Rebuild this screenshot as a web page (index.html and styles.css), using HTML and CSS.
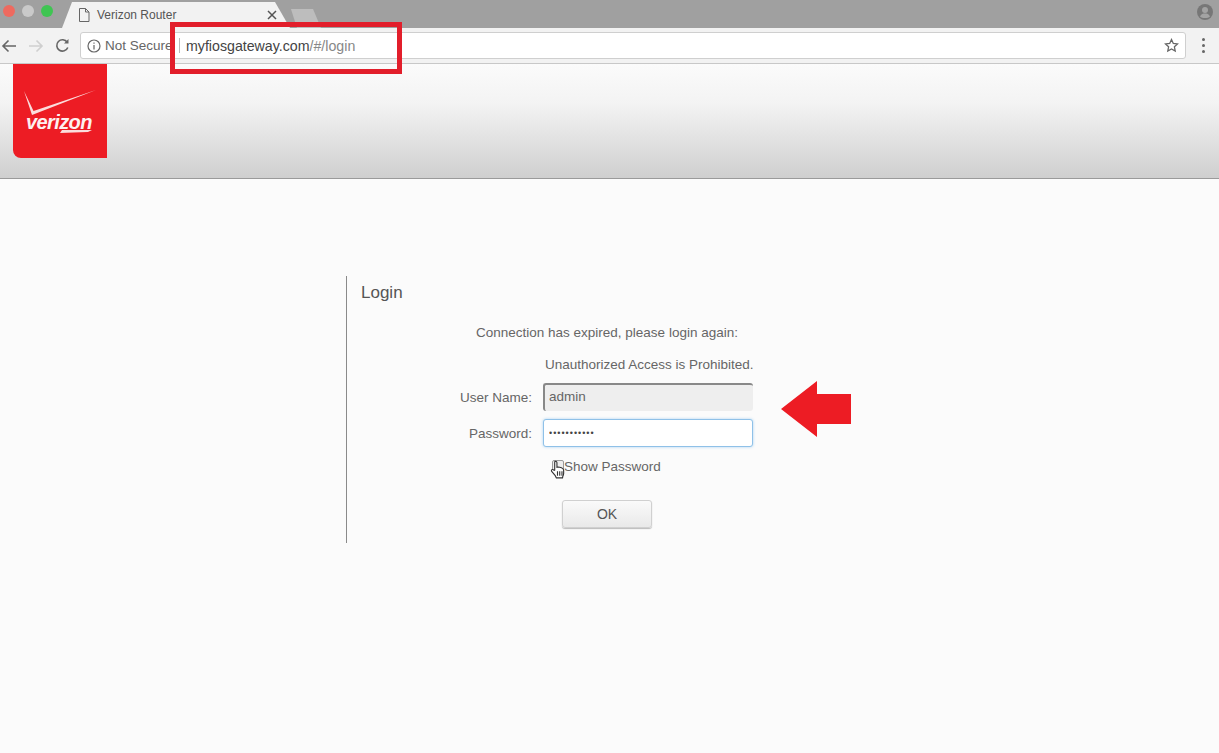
FILE: index.html
```html
<!DOCTYPE html>
<html lang="en">
<head>
    <meta charset="UTF-8">
    <meta name="viewport" content="width=device-width, initial-scale=1.0">
    <title>Verizon Router</title>
    <link rel="stylesheet" href="styles.css">
</head>
<body>
    <div class="tabstrip">
        <div class="lights">
            <span class="light red"></span>
            <span class="light grey"></span>
            <span class="light green"></span>
        </div>
        <div class="tab">
            <svg class="tab-icon" width="12" height="14" viewBox="0 0 12 14" fill="none" stroke="#666" stroke-width="1">
                <path d="M1.5 .5h6l3.5 3.5v9.500h-9.500z"/>
                <path d="M7.500 .5v3.500h3.500"/>
            </svg>
            <span class="tab-title">Verizon Router</span>
            <svg class="tab-close" width="10" height="10" viewBox="0 0 10 10" stroke="#555" stroke-width="1.500">
                <path d="M1 1l8 8M9 1l-8 8"/>
            </svg>
        </div>
        <div class="new-tab"></div>
        <svg class="profile" width="16" height="16" viewBox="0 0 16 16">
            <circle cx="8" cy="8" r="8" fill="#777"/>
            <circle cx="8" cy="6" r="3" fill="#a3a3a3"/>
            <path d="M3 12.500c1-2.500 3-3 5-3s4 .5 5 3c-1 1-3 1.500-5 1.500s-4-.5-5-1.500z" fill="#a3a3a3"/>
        </svg>
    </div>

    <div class="toolbar">
        <svg class="nav-icon" width="16" height="14" viewBox="0 0 16 14" fill="none" stroke="#666" stroke-width="1.600">
            <path d="M15 7H2M7.500 1.500L2 7l5.500 5.500"/>
        </svg>
        <svg class="nav-icon" width="16" height="14" viewBox="0 0 16 14" fill="none" stroke="#cfcfcf" stroke-width="1.600">
            <path d="M1 7h13M8.500 1.500L14 7l-5.500 5.500"/>
        </svg>
        <svg class="nav-icon" width="15" height="15" viewBox="0 0 15 15" fill="none" stroke="#666" stroke-width="1.600">
            <path d="M12.800 9.500a5.700 5.700 0 1 1-.6-5.300"/>
            <path d="M13.500 1v4.500H9" fill="#666" stroke="none"/>
        </svg>
        <div class="omnibox">
            <svg class="info" width="14" height="14" viewBox="0 0 14 14" fill="none" stroke="#666" stroke-width="1.200">
                <circle cx="7" cy="7" r="6"/>
                <path d="M7 6v4.500M7 3.500v1.200"/>
            </svg>
            <span class="secure">Not Secure</span>
            <span class="divider"></span>
            <span class="url">myfiosgateway.com<span class="url-path">/#/login</span></span>
            <svg class="star" width="15" height="15" viewBox="0 0 15 15" fill="none" stroke="#666" stroke-width="1.300">
                <path d="M7.500 1.500l1.800 3.900 4.200.5-3.100 2.900.8 4.200-3.700-2.100-3.700 2.100.8-4.200-3.100-2.900 4.200-.5z"/>
            </svg>
        </div>
        <div class="menu-dots">
            <span></span><span></span><span></span>
        </div>
    </div>

    <header class="page-header">
        <div class="logo">
            <svg class="logo-check" width="74" height="28" viewBox="0 0 74 28">
                <path d="M0 1l8 24L72 0 9.500 21z" fill="#fbdcdc"/>
            </svg>
            <span class="logo-text">verizon</span>
            <svg class="logo-swoosh" width="32" height="4" viewBox="0 0 32 4">
                <path d="M0 4l2-3h30l-4 2z" fill="#fbdcdc"/>
            </svg>
        </div>
    </header>

    <main class="content">
        <section class="login-box">
            <h1>Login</h1>
            <p class="msg msg-expired">Connection has expired, please login again:</p>
            <p class="msg msg-warn">Unauthorized Access is Prohibited.</p>
            <div class="form-row row-user">
                <label for="user">User Name:</label>
                <input id="user" class="field field-user" type="text" value="admin">
            </div>
            <div class="form-row row-pass">
                <label for="pass">Password:</label>
                <input id="pass" class="field field-pass" type="password" value="adminadmin1">
            </div>
            <div class="show-row">
                <span class="checkbox"></span>
                <span>Show Password</span>
                <svg class="cursor" width="15" height="19" viewBox="0 0 13 17">
                    <path d="M4 1.500c1-.7 2 0 2 1v4l1-.2 1.500.2 1.500.4 1 .6c.6.4 1 1 1 2v2.500c0 1-.4 2-.8 2.800l-.2 1.200H5.500l-1-2-3-3.500c-.7-1-.5-1.800.3-2 .7-.2 1.200.2 1.700.8L4 9z" fill="#fff" stroke="#333" stroke-width="1"/>
                    <path d="M6.500 10v4M8.500 10v4M10.500 10v4" stroke="#333" stroke-width="1"/>
                </svg>
            </div>
            <button class="ok-btn" type="button">OK</button>
        </section>
    </main>

    <!-- annotations painted over the screenshot -->
    <div class="url-highlight"></div>
    <svg class="arrow" width="70" height="56" viewBox="0 0 70 56">
        <path d="M0 28L36 0v13h34v30H36v13z" fill="#ed1c24"/>
    </svg>
</body>
</html>
```

FILE: styles.css
```css
html, body {
    height: 100%;
}
body {
    margin: 0;
    font-family: "Liberation Sans", Arial, sans-serif;
    background-color: #fbfbfb;
    color: #666;
    overflow: hidden;
}

/* browser chrome */
.tabstrip {
    display: flex;
    align-items: flex-end;
    height: 28px;
    background-color: #a0a0a0;
    position: relative;
}
.lights {
    display: flex;
    gap: 7px;
    align-self: flex-start;
    margin: 5px 0 0 3px;
    width: 59px;
}
.light {
    width: 12px;
    height: 12px;
    border-radius: 50%;
}
.light.red { background-color: #ee6a5f; }
.light.grey { background-color: #c9c9c9; }
.light.green { background-color: #3fc552; }
.tab {
    display: flex;
    align-items: center;
    box-sizing: border-box;
    width: 228px;
    height: 26px;
    padding: 0 13px 0 16px;
    background-color: #f2f2f2;
    clip-path: polygon(0 100%, 10px 0, 213px 0, 228px 100%);
}
.tab-icon {
    margin-right: 7px;
}
.tab-title {
    flex: 1;
    font-size: 12px;
    color: #555;
}
.new-tab {
    width: 30px;
    height: 19px;
    margin-left: 1px;
    background-color: #bdbdbd;
    clip-path: polygon(0 0, 22px 0, 30px 100%, 6px 100%);
}
.profile {
    margin-left: auto;
    margin-right: 6px;
    align-self: flex-start;
    margin-top: 4px;
}
.toolbar {
    display: flex;
    align-items: center;
    box-sizing: border-box;
    height: 36px;
    background-color: #f2f2f2;
    border-bottom: 1px solid #c8c8c8;
}
.nav-icon {
    flex: none;
    margin-left: 1px;
    margin-right: 11px;
}
.nav-icon + .nav-icon {
    margin-left: 0;
}
.omnibox {
    display: flex;
    align-items: center;
    box-sizing: border-box;
    margin-left: -1px;
    width: 1106px;
    height: 27px;
    padding: 0 6px;
    background-color: #fff;
    border: 1px solid #cfcfcf;
    border-radius: 3px;
    white-space: nowrap;
    font-size: 14.200px;
}
.info {
    flex: none;
    margin-right: 4px;
}
.secure {
    color: #666;
    width: 70px;
    font-size: 13.500px;
}
.divider {
    width: 1px;
    height: 15px;
    margin: 0 6px 0 4px;
    background-color: #bbb;
}
.url {
    color: #444;
}
.url-path {
    color: #888;
}
.star {
    margin-left: auto;
}
.menu-dots {
    display: flex;
    flex-direction: column;
    gap: 3px;
    margin-left: 16px;
}
.menu-dots span {
    width: 3px;
    height: 3px;
    border-radius: 50%;
    background-color: #666;
}

/* router page */
.page-header {
    box-sizing: border-box;
    height: 115px;
    padding-left: 13px;
    background: linear-gradient(#fbfbfb, #f3f3f3 35%, #cfcfcf);
    border-bottom: 1px solid #9a9a9a;
}
.logo {
    position: relative;
    box-sizing: border-box;
    width: 94px;
    height: 94px;
    background-color: #ed1c24;
    border-bottom-left-radius: 8px;
}
.logo-check {
    display: block;
    position: absolute;
    left: 11px;
    top: 26px;
}
.logo-text {
    position: absolute;
    left: 13px;
    top: 47px;
    font-size: 20px;
    font-weight: bold;
    font-style: italic;
    letter-spacing: -.6px;
    color: #fdf0f0;
}
.logo-swoosh {
    position: absolute;
    left: 47px;
    top: 65px;
}
.content {
    padding: 97px 0 0 346px;
}
.login-box {
    box-sizing: border-box;
    width: 430px;
    height: 267px;
    padding: 7px 0 0 14px;
    border-left: 1px solid #8a8a8a;
    font-size: 13.500px;
}
.login-box h1 {
    margin: 0;
    font-size: 17px;
    font-weight: normal;
    line-height: 20px;
    color: #555;
}
.msg {
    margin: 0;
    line-height: 16px;
}
.msg-expired {
    margin: 22px 0 0 115px;
}
.msg-warn {
    margin: 16px 0 0 184px;
}
.form-row {
    display: flex;
    align-items: center;
    height: 35px;
}
.row-user {
    margin-top: 6px;
}
.row-pass {
    margin-top: 1px;
}
.form-row label {
    width: 171px;
    padding-top: 2px;
    text-align: right;
    margin-right: 11px;
}
.field {
    box-sizing: border-box;
    width: 210px;
    height: 28px;
    font-family: inherit;
    font-size: 13.500px;
    color: #666;
    border-radius: 3px;
    outline: none;
}
.field-user {
    padding: 0 4px 2px;
    background-color: #eee;
    border: 0;
    border-top: 2px solid #888;
    border-left: 2px solid #888;
}
.field-pass {
    padding: 0 5px;
    background-color: #fff;
    border: 1px solid #8fc1e8;
    box-shadow: 0 0 3px #a9d2f2;
    font-size: 9px;
    letter-spacing: 1px;
    color: #444;
}
.show-row {
    position: relative;
    display: flex;
    align-items: center;
    height: 16px;
    margin: 8px 0 0 191px;
}
.checkbox {
    box-sizing: border-box;
    width: 12px;
    height: 12px;
    background-color: #eee;
    border: 1px solid #999;
    border-radius: 2px;
}
.cursor {
    position: absolute;
    left: -2px;
    top: 2px;
}
.ok-btn {
    display: block;
    width: 90px;
    height: 28px;
    margin: 26px 0 0 201px;
    font-family: inherit;
    font-size: 14px;
    color: #555;
    background: linear-gradient(#fafafa, #e9e9e9);
    border: 1px solid #d0d0d0;
    border-radius: 3px;
    box-shadow: 0 1px 1px #bbb;
}

/* annotations */
.url-highlight {
    position: absolute;
    left: 170px;
    top: 22px;
    width: 222px;
    height: 42px;
    border: 5px solid #e21e2b;
}
.arrow {
    position: absolute;
    left: 781px;
    top: 381px;
}
```
